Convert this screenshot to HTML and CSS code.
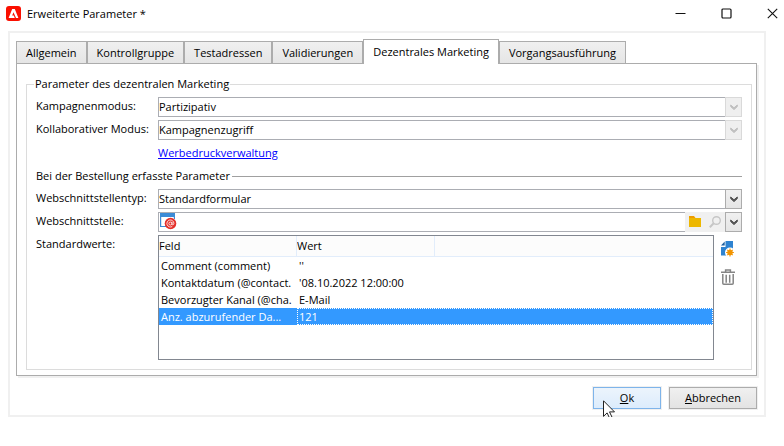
FILE: index.html
```html
<!DOCTYPE html>
<html lang="de">
<head>
<meta charset="utf-8">
<title>Erweiterte Parameter</title>
<link rel="stylesheet" href="styles.css">
</head>
<body>
<header class="titlebar">
  <svg class="logo" viewBox="0 0 15 15"><rect width="15" height="15" rx="3" fill="#fa0f00"/><path d="M6.2 3h2.600L12.400 12H10L7.500 6.300 6.200 9.400h1.600l1 2.600H2.600z" fill="#fff"/></svg>
  <h1 class="title">Erweiterte Parameter *</h1>
  <div class="window-controls">
    <button type="button" aria-label="Minimieren"><svg viewBox="0 0 11 11"><path d="M.5 5.500H10.500" stroke="#111" fill="none"/></svg></button>
    <button type="button" aria-label="Maximieren"><svg viewBox="0 0 11 11"><rect x="1" y="1" width="9" height="9" rx="1" stroke="#111" stroke-width="1.200" fill="none"/></svg></button>
    <button type="button" aria-label="Schließen"><svg viewBox="0 0 11 11"><path d="M.8.800l9.400 9.400M10.200.800L.800 10.200" stroke="#111" stroke-width="1.100" fill="none"/></svg></button>
  </div>
</header>
<main class="dialog">
  <div class="tabs" role="tablist">
    <button class="tab" type="button" role="tab">Allgemein</button>
    <button class="tab" type="button" role="tab">Kontrollgruppe</button>
    <button class="tab" type="button" role="tab">Testadressen</button>
    <button class="tab" type="button" role="tab">Validierungen</button>
    <button class="tab tab-active" type="button" role="tab" aria-selected="true">Dezentrales Marketing</button>
    <button class="tab" type="button" role="tab">Vorgangsausführung</button>
  </div>
  <section class="pane" role="tabpanel">
    <fieldset class="group">
      <legend>Parameter des dezentralen Marketing</legend>
      <div class="form">
        <label for="mode">Kampagnenmodus:</label>
        <div class="combo combo-disabled">
          <select id="mode" disabled><option>Partizipativ</option></select>
          <span class="arrow"><svg viewBox="0 0 8 7"><path d="M.7 1v1.600L4 5.600l3.300-3V1L4 3.800z"/></svg></span>
        </div>
        <label for="collab">Kollaborativer Modus:</label>
        <div class="combo combo-disabled">
          <select id="collab" disabled><option>Kampagnenzugriff</option></select>
          <span class="arrow"><svg viewBox="0 0 8 7"><path d="M.7 1v1.600L4 5.600l3.300-3V1L4 3.800z"/></svg></span>
        </div>
        <a class="link" href="#">Werbedruckverwaltung</a>
        <h2 class="section">Bei der Bestellung erfasste Parameter</h2>
        <label for="type">Webschnittstellentyp:</label>
        <div class="combo">
          <select id="type"><option>Standardformular</option></select>
          <span class="arrow"><svg viewBox="0 0 8 7"><path d="M.7 1v1.600L4 5.600l3.300-3V1L4 3.800z"/></svg></span>
        </div>
        <label for="iface">Webschnittstelle:</label>
        <div class="picker">
          <div class="picker-field">
            <svg class="form-icon" viewBox="0 0 17 17"><path d="M.6 1v12.500H6M14.400 1v5" fill="none" stroke="#3b8bd6" stroke-width="1.200"/><path d="M0 0h15v4H0z" fill="#3b8bd6"/><circle cx="10.500" cy="10.500" r="5.800" fill="#e5302a"/><circle cx="10.400" cy="10.500" r="1.500" fill="none" stroke="#fff" stroke-width=".8"/><path d="M12 8.800v2.400q.2 1 1.100.7.900-.5.800-1.700A3.500 3.500 0 1 0 12.200 13.500" fill="none" stroke="#fff" stroke-width=".8"/></svg>
            <input id="iface" type="text">
          </div>
          <button class="tool" type="button" aria-label="Ordner öffnen"><svg viewBox="0 0 12 12"><path d="M0 0h5l1.500 2H0z" fill="#ee9c00"/><path d="M0 2h12v9H0z" fill="#edb700"/></svg></button>
          <button class="tool" type="button" aria-label="Suchen"><svg viewBox="0 0 12 12"><circle cx="7.500" cy="4.500" r="3.800" fill="none" stroke="#c6c6c6" stroke-width="1.400"/><path d="M4.700 7.300L.8 11.200" stroke="#c6c6c6" stroke-width="2"/></svg></button>
          <button class="arrow" type="button" aria-label="Liste öffnen"><svg viewBox="0 0 8 7"><path d="M.7 1v1.600L4 5.600l3.300-3V1L4 3.800z"/></svg></button>
        </div>
        <span>Standardwerte:</span>
        <div class="values">
          <div class="list">
            <table aria-label="Standardwerte">
              <colgroup><col class="col-field"><col class="col-value"><col></colgroup>
              <thead><tr><th>Feld</th><th>Wert</th><th></th></tr></thead>
              <tbody>
                <tr><td>Comment (comment)</td><td colspan="2">''</td></tr>
                <tr><td>Kontaktdatum (@contact.</td><td colspan="2">'08.10.2022 12:00:00</td></tr>
                <tr><td>Bevorzugter Kanal (@cha.</td><td colspan="2">E-Mail</td></tr>
                <tr class="selected"><td>Anz. abzurufender Da...</td><td colspan="2">121</td></tr>
              </tbody>
            </table>
          </div>
          <div class="side">
            <button type="button" aria-label="Hinzufügen"><svg viewBox="0 0 14 16"><path d="M4.500 0H12v8L7 14.500H0V6h4.500z" fill="#2f83d0"/><path d="M0 4.500L3.700.500v4z" fill="#1d5f9f"/><circle cx="9" cy="11.500" r="5" fill="#fff"/><circle cx="9" cy="11.500" r="2.700" fill="#f29400"/><path d="M9 7.600v7.800M5.100 11.500h7.800M6.300 8.800l5.400 5.400M11.700 8.800l-5.400 5.400" stroke="#f29400" stroke-width="1.100"/></svg></button>
            <button type="button" aria-label="Löschen"><svg viewBox="0 0 14 16"><path d="M4.600 2.500V.9h4.800v1.600M0 3.200h14" fill="none" stroke="#858585" stroke-width="1.500"/><path d="M1.800 5v9.200q0 1 1 1h8.400q1 0 1-1V5M5.200 5.800v8M8.700 5.800v8" fill="none" stroke="#858585" stroke-width="1.500"/></svg></button>
          </div>
        </div>
      </div>
    </fieldset>
  </section>
  <footer class="actions">
    <button class="btn btn-ok" type="button"><u>O</u>k
      <svg class="cursor" viewBox="0 0 12 19"><path d="M.5.800v15.600l3.600-3.500 2.500 5.300 2.400-1.100-2.500-5.200h5z" fill="#fff" stroke="#222" stroke-width="1"/></svg></button>
    <button class="btn" type="button"><u>A</u>bbrechen</button>
  </footer>
</main>
</body>
</html>
```
FILE: styles.css
```css
* { box-sizing: border-box; }
body {
  margin: 0;
  background: #fff;
  color: #000;
  font: 11px/16px "Open Sans", "Noto Sans", sans-serif;
}
button, input, select { margin: 0; padding: 0; font: inherit; color: inherit; border: 0; border-radius: 0; background: none; }
svg { display: block; flex: none; }

.titlebar { display: flex; align-items: center; height: 31px; padding: 0 1px 4px 6px; }
.logo { width: 15px; height: 15px; }
.title { margin: 0 auto 0 6px; font-size: 11px; font-weight: 400; }
.window-controls { display: flex; }
.window-controls button { display: grid; place-items: center; width: 46px; height: 27px; }
.window-controls button:last-child { width: 34px; padding-left: 12px; }
.window-controls svg { width: 11px; height: 11px; }

.dialog { margin: 0 18px 0 8px; padding: 6px 7px 6px 6px; border: 2px solid #f0f0f0; }
.tabs { display: flex; align-items: flex-end; position: relative; height: 25px; margin-bottom: -1px; }
.tab {
  height: 23px;
  padding: 0 9px;
  border: 1px solid #acacac;
  background: linear-gradient(#f0f0f0, #e5e5e5);
  white-space: nowrap;
}
.tab-active { height: 25px; background: #fff; border-bottom: 0; }
.pane { padding: 12px 4px 5px 9px; border: 1px solid #acacac; box-shadow: 2px 2px 0 #f0f0f0; }

.group { margin: 0; padding: 5px 9px 9px; border: 1px solid #dcdcdc; min-width: 0; }
.group legend { padding: 0 1px; margin-left: -2px; }
.form { display: grid; grid-template-columns: 122px minmax(0, 1fr); row-gap: 3px; }
.form > label, .form > span { padding-top: 1px; white-space: nowrap; }
.combo { display: flex; position: relative; height: 20px; }
.combo select { flex: 1; appearance: none; border: 1px solid #abadb3; background: #fff; opacity: 1; color: #000; }
.arrow {
  display: grid;
  place-items: center;
  width: 17px;
  height: 20px;
  border: 1px solid #acacac;
  background: linear-gradient(#f0f0f0, #e5e5e5);
}
.combo .arrow { position: absolute; top: 0; right: 0; pointer-events: none; }
.arrow svg { width: 8px; height: 7px; fill: #505050; stroke: #505050; stroke-width: 1; }
.combo-disabled .arrow { border-color: #d9d9d9; background: #efefef; }
.combo-disabled .arrow svg { fill: #bfbfbf; stroke: #bfbfbf; }
.link { grid-column: 2; justify-self: start; margin: 2px 0 4px; color: #00f; }
.section { display: flex; grid-column: 1 / -1; align-items: center; gap: 2px; margin: 0 0 2px; font-size: 11px; font-weight: 400; }
.section::after { content: ""; flex: 1; height: 1px; background: #a0a0a0; }

.picker { display: flex; height: 20px; background: #f0f0f0; }
.picker-field { display: flex; flex: 1; border: 1px solid #abadb3; border-right: 0; background: #fff; }
.picker-field input { flex: 1; min-width: 0; outline: 0; }
.form-icon { width: 17px; height: 17px; margin-left: 1px; }
.tool { display: grid; place-items: center; width: 20px; height: 20px; }
.tool svg { width: 12px; height: 12px; }

.values { display: flex; gap: 7px; }
.list { flex: 1; height: 125px; border: 1px solid #828790; overflow: hidden; }
table { width: 100%; table-layout: fixed; border-collapse: separate; border-spacing: 0; }
.col-field { width: 138px; }
.col-value { width: 138px; }
th, td { overflow: hidden; white-space: nowrap; text-align: left; font-weight: 400; }
th { height: 21px; padding: 0; border-right: 1px solid #e2edfb; border-bottom: 1px solid #e2edfb; background: #fcfcfc; }
th:last-child { border-right: 0; }
td { height: 17px; padding: 0 0 0 2px; line-height: 15px; }
.selected { background: #3399ff; color: #fff; }
.selected td + td { outline: 1px dotted #fff; outline-offset: -1px; }
.side { display: flex; flex-direction: column; gap: 12px; width: 21px; padding-top: 6px; }
.side svg { width: 14px; height: 16px; }

.actions { display: flex; justify-content: flex-end; gap: 8px; padding: 11px 0 0; }
.btn {
  position: relative;
  width: 88px;
  height: 22px;
  border: 1px solid #acacac;
  background: linear-gradient(#f0f0f0, #e3e3e3);
  box-shadow: 0 0 0 1px #f0f0f0;
}
.btn-ok { width: 68px; border-color: #7eb4ea; background: linear-gradient(#ecf4fc, #dcecfc); }
.cursor { position: absolute; left: 9px; top: 12px; width: 12px; height: 19px; }
```
